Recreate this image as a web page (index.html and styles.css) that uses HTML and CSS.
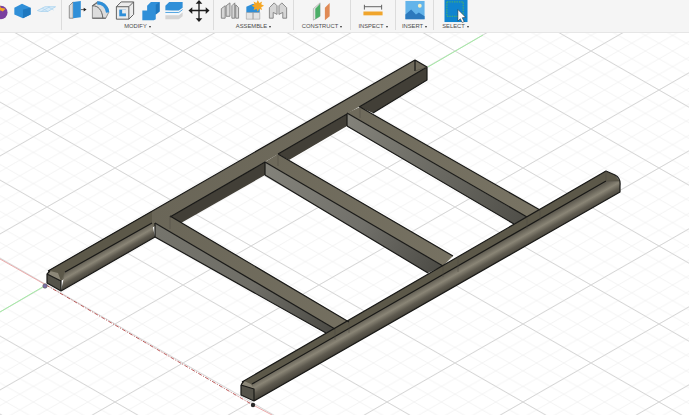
FILE: index.html
```html
<!DOCTYPE html>
<html lang="en">
<head>
<meta charset="utf-8">
<title>Frame model</title>
<link rel="stylesheet" href="styles.css">
</head>
<body>
<div class="app">
  <header class="toolbar">
    <section class="group group-create">
      <div class="icons">
        <svg class="icon" viewBox="0 0 24 24"><circle class="i-purple" cx="16" cy="13" r="7"/><path class="i-orange" d="M14 3l2 5 5 1-3 3-2-1-3 0z"/></svg>
        <svg class="icon" viewBox="0 0 24 24"><path class="i-blue" d="M4 8l8-4 9 4v7l-8 4-9-4z"/><path class="i-blue-d" d="M13 10l8-2v7l-8 4z"/></svg>
        <svg class="icon" viewBox="0 0 24 24"><path class="i-plane" d="M3 11l8-4h11l-8 5H6z"/><path class="i-plane-line" d="M8 8.500l6 3.500M14 7l6 3.500M7 12l9-5"/></svg>
      </div>
    </section>
    <section class="group group-modify">
      <div class="icons">
        <svg class="icon" viewBox="0 0 24 24"><path class="i-gray" d="M5 6l4-4v17H5z"/><path class="i-blue" d="M9 2l8-1v17l-8 1z"/><path class="i-stroke" d="M17 10h4"/><path class="i-dark" d="M20 8l3 2-3 2z"/></svg>
        <svg class="icon" viewBox="0 0 24 24"><path class="i-gray" d="M3 19V6l5-4c6 0 12 4 12 11l-3 6z"/><path class="i-blue-arc" d="M8 3c6 0 10 4 11 10"/><path class="i-stroke" d="M3 6l5-3M3 6c6 0 10 4 11 13M3 19h14"/></svg>
        <svg class="icon" viewBox="0 0 24 24"><path class="i-light" d="M3 7l5-5h13v13l-5 5H3z"/><path class="i-stroke" d="M3 7l5-5h13v13l-5 5H3zM3 7h13v13M16 7l5-5"/><path class="i-blue" d="M6 10h7v7H6z"/><path class="i-light" d="M9 10h4v4H9z"/></svg>
        <svg class="icon" viewBox="0 0 24 24"><path class="i-blue" d="M9 6l4-4h9v10l-4 3v5l-2 1H4V11h5z"/><path class="i-blue-d" d="M18 5l4-3v10l-4 3z"/></svg>
        <svg class="icon" viewBox="0 0 24 24"><path class="i-blue" d="M3 6l4-4h14v6l-4 3H3z"/><path class="i-pale" d="M3 11l14 1 4-3v4l-4 3H3z"/><path class="i-blue-line" d="M3 13h14l4-3"/><path class="i-gray-f" d="M3 16h14l4-3v4l-4 3H3z"/></svg>
        <svg class="icon" viewBox="0 0 24 24"><path class="i-move" d="M12 3v17M3 11h18"/><path class="i-dark" d="M12 0l3.500 4h-7zM12 23l3.500-4h-7zM1 11l4-3.500v7zM23 11l-4-3.500v7z"/></svg>
      </div>
      <div class="label">MODIFY<span class="caret"></span></div>
    </section>
    <section class="group group-assemble">
      <div class="icons">
        <svg class="icon" viewBox="0 0 24 24"><path class="i-gray-o" d="M4 19V9l4-3v13zM9 17V6l4-3v14zM15 19V6l3-3v16zM19 19V5l3 3v11z"/></svg>
        <svg class="icon" viewBox="0 0 24 24"><path class="i-blue" d="M4 7l7-3 7 3v6l-7 3-7-3z"/><path class="i-pale-g" d="M4 13h7v7H4zM11 13h7v7h-7z"/><path class="i-orange" d="M16 0l1.500 3 3-1.500-1 3 3 1.500-3 1.500 1 3-3-1.500L16 12l-1.500-2.500-3 1 1-3-3-1.500 3-1.500-1-3 3 1.500z"/></svg>
        <svg class="icon" viewBox="0 0 24 24"><path class="i-gray-o" d="M3 19V8l5-5 3 3v9l-4-2v6zM21 19V8l-5-5-3 3v9l4-2v6z"/></svg>
      </div>
      <div class="label">ASSEMBLE<span class="caret"></span></div>
    </section>
    <section class="group group-construct">
      <div class="icons">
        <svg class="icon" viewBox="0 0 24 24"><path class="i-pale-g" d="M3 9l7-6v14l-7 4z"/><path class="i-green" d="M5 9l5-5v13l-5 3z"/><path class="i-orange-p" d="M15 8l5-5v14l-5 4z"/></svg>
      </div>
      <div class="label">CONSTRUCT<span class="caret"></span></div>
    </section>
    <section class="group group-inspect">
      <div class="icons">
        <svg class="icon" viewBox="0 0 24 24"><path class="i-stroke" d="M3 7h18M3 5v5M21 5v5"/><path class="i-ruler" d="M2 12h20v4H2z"/></svg>
      </div>
      <div class="label">INSPECT<span class="caret"></span></div>
    </section>
    <section class="group group-insert">
      <div class="icons">
        <svg class="icon" viewBox="0 0 24 24"><rect class="i-sky" x="2" y="1" width="20" height="19"/><circle class="i-sun" cx="17" cy="6" r="2"/><path class="i-mount" d="M2 20v-5l6-5 5 5 3-2 6 4v3z"/></svg>
      </div>
      <div class="label">INSERT<span class="caret"></span></div>
    </section>
    <section class="group group-select">
      <div class="icons">
        <svg class="icon icon-wide" viewBox="0 0 24 24"><rect class="i-sel" x="0" y="0" width="24" height="23"/><rect class="i-dash" x="2.500" y="2" width="17" height="15"/><path class="i-cursor" d="M14 10l8 8-3.500 .5 2 4-2 1-2-4-2.500 2.500z"/></svg>
      </div>
      <div class="label">SELECT<span class="caret"></span></div>
    </section>
  </header>
  <main class="viewport">
    <svg class="scene" viewBox="0 33 689 382" preserveAspectRatio="none" role="img" aria-label="Ladder-shaped frame model on an isometric grid">
      <defs>
        <pattern id="gridMinor" patternUnits="userSpaceOnUse" x="47" y="51" width="27.2" height="15.6">
          <path class="grid-minor" d="M0 0L27.200 15.600M0 15.600L27.200 0"/>
        </pattern>
        <pattern id="gridMajor" patternUnits="userSpaceOnUse" x="47" y="51" width="136" height="78">
          <path class="grid-major" d="M0 0L136 78M0 78L136 0"/>
        </pattern>
        <linearGradient id="filletLeft" gradientUnits="userSpaceOnUse" x1="100" y1="252" x2="108" y2="266">
          <stop offset="0" stop-color="#625e53"/><stop offset=".35" stop-color="#8a8576"/><stop offset=".62" stop-color="#5f5b50"/><stop offset="1" stop-color="#403d35"/>
        </linearGradient>
        <linearGradient id="filletRight" gradientUnits="userSpaceOnUse" x1="400" y1="299" x2="409" y2="315">
          <stop offset="0" stop-color="#625e53"/><stop offset=".32" stop-color="#8a8576"/><stop offset=".6" stop-color="#5f5b50"/><stop offset="1" stop-color="#403d35"/>
        </linearGradient>
        <linearGradient id="sideA" gradientUnits="userSpaceOnUse" x1="155" y1="230" x2="335" y2="330">
          <stop offset="0" stop-color="#75746c"/><stop offset=".55" stop-color="#6f6e67"/><stop offset="1" stop-color="#4b4a44"/>
        </linearGradient>
        <linearGradient id="sideB" gradientUnits="userSpaceOnUse" x1="265" y1="168" x2="443" y2="270">
          <stop offset="0" stop-color="#83827a"/><stop offset=".55" stop-color="#71706a"/><stop offset="1" stop-color="#4b4a44"/>
        </linearGradient>
        <linearGradient id="sideC" gradientUnits="userSpaceOnUse" x1="347" y1="120" x2="527" y2="222">
          <stop offset="0" stop-color="#83827a"/><stop offset=".55" stop-color="#686760"/><stop offset="1" stop-color="#4f4e48"/>
        </linearGradient>
        <linearGradient id="topFace" gradientUnits="userSpaceOnUse" x1="200" y1="100" x2="500" y2="300">
          <stop offset="0" stop-color="#696557"/><stop offset="1" stop-color="#797464"/>
        </linearGradient>
      </defs>
      <rect class="canvas" x="0" y="33" width="689" height="382"/>
      <rect class="grid-a" x="0" y="33" width="689" height="382"/>
      <rect class="grid-b" x="0" y="33" width="689" height="382"/>

      <path class="axis-red-light" d="M0 259L46 285M253 405L272 415"/>
      <path class="axis-red" d="M46 285L253 405"/>
      <path class="axis-green" d="M46 285L0 312M428 67L483 35"/>

      <polygon class="f-top" points="48,271 415,60 427,67 61,281"/>
      <polygon class="f-band" points="48,271 152,211 152,223 65,272 61,281"/>
      <polygon class="f-fillet-l" points="65,272 152,223 155,237 61,291"/>
      <polygon class="f-cap" points="47,274 50,271 58,273 61,281"/>
      <polygon class="f-front" points="47,274 61,281 61,291 47,283"/>
      <polygon class="f-inner" points="359,107 427,67 427,80 373,113"/>
      <polygon class="f-inner" points="170,217 265,162 265,175 181,223"/>
      <polygon class="f-inner" points="278,154 347,114 347,126 289,160"/>

      <polygon class="f-side-a" points="155,223 335,329 326,333 155,237"/>
      <polygon class="f-side-b" points="265,162 443,266 428,273 265,175"/>
      <polygon class="f-side-c" points="347,113 527,217 514,224 347,126"/>
      <polygon class="f-top" points="155,223 170,216 349,322 335,329"/>
      <polygon class="f-top" points="265,162 278,154 453,256 443,266"/>
      <polygon class="f-top" points="347,113 360,107 540,210 527,217"/>

      <polygon class="f-band" points="242,382 606,171 615,175 620,181 254,390 241,385"/>
      <polygon class="f-fillet-r" points="252,384 606,181 620,181 620,192 254,401"/>
      <polygon class="f-cap" points="241,385 244,381 251,384 254,389"/>
      <polygon class="f-front" points="241,385 254,389 254,401 241,395"/>

      <path class="edge" d="M48 271L415 60L427 67L427 80L373 113M359 107L427 67M415 60V71M61 291L155 237M47 274L61 281V291L47 283ZM47 274L50 271M65 272L152 223"/>
      <path class="edge" d="M170 217L265 162V175M278 154L347 114V126M155 223V237"/>
      <path class="edge" d="M170 216L349 322M155 223L335 329M155 237L326 333"/>
      <path class="edge" d="M265 162L443 266M278 154L453 256M265 175L428 273"/>
      <path class="edge" d="M347 113L527 217M360 107L540 210M347 126L514 224"/>
      <path class="edge" d="M242 382L606 171L615 175Q621 178 620 186V192L254 401L241 395V385L254 389V401M241 385L244 381M252 384L606 181"/>
      <path class="faint" d="M170 216V229M278 154V166M360 107V118M335 329V340M349 322V333M443 266V277M458 257V272M527 217V229M540 210V221M606 171V181M606 181L620 181M415 71L427 67"/>
      <circle class="origin" cx="45" cy="286" r="2.200"/>
      <circle class="dot" cx="253" cy="405" r="2.200"/>
    </svg>
  </main>
</div>
</body>
</html>
```
FILE: styles.css
```css
html, body {
  margin: 0;
  padding: 0;
  width: 100%;
  height: 100%;
  overflow: hidden;
  background: #fff;
}
.app {
  display: flex;
  flex-direction: column;
  width: 689px;
  height: 415px;
}
.toolbar {
  display: flex;
  flex: 0 0 33px;
  box-sizing: border-box;
  height: 33px;
  background: #f5f5f5;
  border-bottom: 1px solid #e6e6e6;
  font-family: "Liberation Sans", Arial, sans-serif;
}
.group {
  display: flex;
  flex-direction: column;
  align-items: center;
  box-sizing: border-box;
  height: 30px;
  border-right: 1px solid #dcdcdc;
}
.group-create { width: 62px; align-items: flex-end; padding-right: 3px; }
.group-modify { width: 152px; }
.group-assemble { width: 80px; }
.group-construct { width: 57px; }
.group-inspect { width: 45px; }
.group-insert { width: 38px; }
.group-select { width: 43px; border-right: 0; }
.icons {
  display: flex;
  justify-content: center;
  gap: .5px;
  height: 23px;
  flex: none;
}
.icon { display: block; width: 24px; height: 23px; flex: none; }
.label {
  display: flex;
  align-items: center;
  height: 7px;
  font-size: 5.800px;
  line-height: 7px;
  color: #4d4d4d;
  white-space: nowrap;
}
.caret {
  display: block;
  margin-left: 2px;
  border-left: 1.500px solid transparent;
  border-right: 1.500px solid transparent;
  border-top: 2px solid #333;
}
.viewport { flex: 1; min-height: 0; }
.scene { display: block; width: 689px; height: 382px; }

.canvas { fill: #fff; }
.grid-a { fill: url(#gridMinor); }
.grid-b { fill: url(#gridMajor); }
.grid-minor { fill: none; stroke: #f0f0f0; stroke-width: .8; }
.grid-major { fill: none; stroke: #d2d2d2; stroke-width: .9; }
.axis-red-light { fill: none; stroke: #eba3a3; stroke-width: .9; }
.axis-red { fill: none; stroke: #b54a4a; stroke-width: .9; stroke-dasharray: 4 1.500 1 1.500; }
.axis-green { fill: none; stroke: #a5eda5; stroke-width: 1; }

.f-top { fill: url(#topFace); }
.f-band { fill: #5c5849; }
.f-fillet-l { fill: url(#filletLeft); }
.f-fillet-r { fill: url(#filletRight); }
.f-cap { fill: #8c8778; }
.f-front { fill: #55534a; }
.f-inner { fill: #423f37; }
.f-side-a { fill: url(#sideA); }
.f-side-b { fill: url(#sideB); }
.f-side-c { fill: url(#sideC); }
.edge { fill: none; stroke: #191917; stroke-width: 1.200; stroke-linejoin: round; }
.faint { fill: none; stroke: #4f4b40; stroke-width: .5; }
.origin { fill: #7d6fa8; stroke: #555; stroke-width: .6; }
.dot { fill: #2a2a2a; }

.i-purple { fill: #7a3fa0; }
.i-orange { fill: #f5a623; }
.i-orange-p { fill: #e08a55; }
.i-blue { fill: #2f8fd8; }
.i-blue-d { fill: #1f78bf; }
.i-plane { fill: #d9ecf9; stroke: #a9d2ee; stroke-width: .8; }
.i-plane-line { fill: none; stroke: #a9d2ee; stroke-width: .7; }
.i-gray { fill: #dcdcdc; stroke: #777; stroke-width: .8; }
.i-gray-f { fill: #d4d4d4; }
.i-light { fill: #ececec; }
.i-pale { fill: #f4f8fb; }
.i-pale-g { fill: #e4e4e4; stroke: #999; stroke-width: .6; }
.i-blue-line { fill: none; stroke: #4aa0e0; stroke-width: 1; }
.i-blue-arc { fill: none; stroke: #2f8fd8; stroke-width: 3.500; }
.i-stroke { fill: none; stroke: #5c5c5c; stroke-width: 1; }
.i-dark { fill: #1f1f1f; }
.i-move { fill: none; stroke: #1f1f1f; stroke-width: 1.400; }
.i-gray-o { fill: #d6d6d6; stroke: #7c7c7c; stroke-width: .9; }
.i-green { fill: #4cae68; }
.i-ruler { fill: #f0a52c; }
.i-sky { fill: #63b4ea; }
.i-sun { fill: #f4f1c8; }
.i-mount { fill: #2c79bd; }
.i-sel { fill: #0f84cf; }
.i-dash { fill: none; stroke: #52b85e; stroke-width: 1; stroke-dasharray: 1.500 1; }
.i-cursor { fill: #fff; stroke: #1a1a1a; stroke-width: .5; }
```
